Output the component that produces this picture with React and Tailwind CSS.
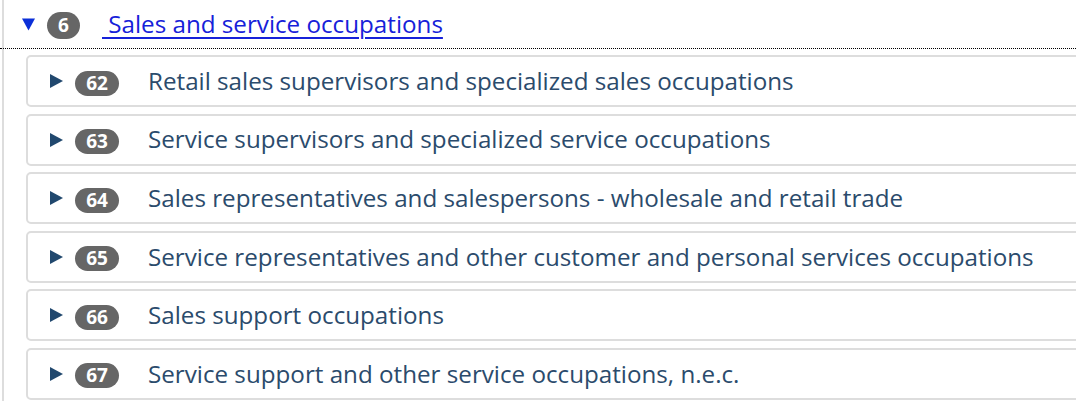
import React from "react";

const items = [
  ["62", "Retail sales supervisors and specialized sales occupations"],
  ["63", "Service supervisors and specialized service occupations"],
  ["64", "Sales representatives and salespersons - wholesale and retail trade"],
  ["65", "Service representatives and other customer and personal services occupations"],
  ["66", "Sales support occupations"],
  ["67", "Service support and other service occupations, n.e.c."],
];

function Tri({ down, color, w, h }) {
  return down ? (
    <svg width={w} height={h} viewBox="0 0 14 13" className="shrink-0">
      <polygon points="0,0 14,0 7,13" fill={color} />
    </svg>
  ) : (
    <svg width={w} height={h} viewBox="0 0 13 14" className="shrink-0">
      <polygon points="0,0 13,7 0,14" fill={color} />
    </svg>
  );
}

export default function App() {
  return (
    <div
      className="w-[1076px] h-[401px] overflow-hidden bg-white"
      style={{ fontFamily: '"Open Sans", "Noto Sans", sans-serif' }}
    >
      <div className="ml-[2px] border-l-2 border-[#dddddd] h-full">
        <div className="-ml-[4px] h-[49px] border-b border-dotted border-black flex items-center">
          <div className="ml-[22px]">
            <Tri down color="#0b2fd8" w={13} h={13} />
          </div>
          <span className="ml-[12px] mt-[2px] w-[33px] h-[27px] rounded-full bg-[#666666] text-white font-bold text-[19px] flex items-center justify-center leading-none">
            6
          </span>
          <a
            href="#"
            className="ml-[22px] text-[24.2px] text-[#1621d9] underline underline-offset-[4px] decoration-[2px] leading-none whitespace-pre"
          >
            {" Sales and service occupations"}
          </a>
        </div>
        <div className="ml-[22px] mt-[6px] flex flex-col gap-[6.6px] w-[1100px]">
          {items.map(([code, label]) => (
            <div
              key={code}
              className="h-[52px] border-2 border-[#dddddd] rounded-[5px] flex items-center"
            >
              <div className="ml-[22px]">
                <Tri color="#21486e" w={13} h={14} />
              </div>
              <span className="ml-[12px] mt-[4px] w-[44px] h-[25px] rounded-full bg-[#666666] text-white font-bold text-[19px] flex items-center justify-center leading-none">
                {code}
              </span>
              <span className="ml-[29px] text-[24.2px] text-[#2b4b6c] whitespace-nowrap">
                {label}
              </span>
            </div>
          ))}
        </div>
      </div>
    </div>
  );
}
